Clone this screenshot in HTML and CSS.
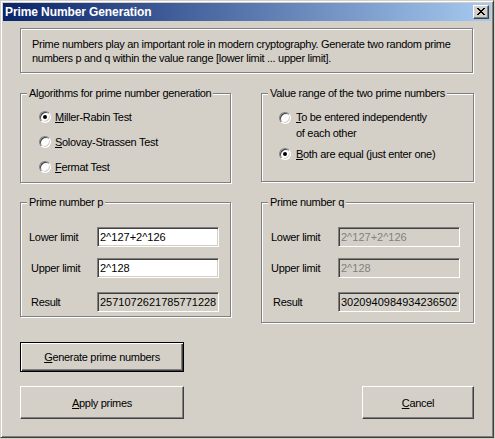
FILE: index.html
```
<!DOCTYPE html>
<html>
<head>
<meta charset="utf-8">
<link rel="stylesheet" href="styles.css">
</head>
<body>
<div class="window">
  <div class="titlebar">
    <span class="title">Prime Number Generation</span>
    <span class="close"><svg width="8" height="7" viewBox="0 0 8 7"><path d="M0 0h2v1h-2zM6 0h2v1h-2zM1 1h2v1h-2zM5 1h2v1h-2zM2 2h4v1h-4zM3 3h2v1h-2zM2 4h4v1h-4zM1 5h2v1h-2zM5 5h2v1h-2zM0 6h2v1h-2zM6 6h2v1h-2z" fill="#000"/></svg></span>
  </div>
  <div class="client">
    <div class="info">Prime numbers play an important role in modern cryptography. Generate two random prime<br>numbers p and q within the value range [lower limit ... upper limit].</div>

    <div class="row row1">
      <div class="group g-alg">
        <span class="legend">Algorithms for prime number generation</span>
        <div class="opts">
          <div class="opt"><span class="radio checked"></span><span><u>M</u>iller-Rabin Test</span></div>
          <div class="opt"><span class="radio"></span><span><u>S</u>olovay-Strassen Test</span></div>
          <div class="opt"><span class="radio"></span><span><u>F</u>ermat Test</span></div>
        </div>
      </div>
      <div class="group g-range">
        <span class="legend">Value range of the two prime numbers</span>
        <div class="opts opts-range">
          <div class="opt two-line"><span class="radio"></span><span><u>T</u>o be entered independently<br>of each other</span></div>
          <div class="opt"><span class="radio checked"></span><span><u>B</u>oth are equal (just enter one)</span></div>
        </div>
      </div>
    </div>

    <div class="row row2">
      <div class="group g-p">
        <span class="legend">Prime number p</span>
        <div class="fields">
          <div class="field"><span class="lbl pad8">Lower limit</span><span class="edit">2^127+2^126</span></div>
          <div class="field"><span class="lbl pad10">Upper limit</span><span class="edit">2^128</span></div>
          <div class="field res"><span class="lbl pad10">Result</span><span class="edit ro">2571072621785771228</span></div>
        </div>
      </div>
      <div class="group g-q">
        <span class="legend">Prime number q</span>
        <div class="fields">
          <div class="field"><span class="lbl pad9">Lower limit</span><span class="edit dis">2^127+2^126</span></div>
          <div class="field"><span class="lbl pad9">Upper limit</span><span class="edit dis">2^128</span></div>
          <div class="field res"><span class="lbl pad11">Result</span><span class="edit ro">3020940984934236502</span></div>
        </div>
      </div>
    </div>

    <div class="btn gen"><span><u>G</u>enerate prime numbers</span></div>

    <div class="actions">
      <div class="btn apply"><span><u>A</u>pply primes</span></div>
      <div class="btn cancel"><span><u>C</u>ancel</span></div>
    </div>
  </div>
</div>
</body>
</html>
```

FILE: styles.css
```
body {
  margin: 0;
  background: #D4D0C8;
  font: 11px/14px "Liberation Sans", Arial, sans-serif;
  letter-spacing: -0.3px;
  color: #000;
}

.window {
  width: 494px;
  height: 438px;
  box-sizing: border-box;
  border: 1px solid;
  border-color: #D4D0C8 #404040 #404040 #D4D0C8;
  box-shadow: inset 1px 1px #fff, inset -1px -1px #808080;
  padding: 2px;
}

.titlebar {
  height: 18px;
  background: linear-gradient(to right, #0A246A, #A6CAF0);
  display: flex;
  align-items: center;
  justify-content: space-between;
  padding: 0 2px;
}

.title {
  color: #fff;
  font-weight: bold;
  font-size: 12px;
  letter-spacing: -0.1px;
}

.close {
  width: 16px;
  height: 14px;
  box-sizing: border-box;
  background: #D4D0C8;
  border: 1px solid;
  border-color: #fff #404040 #404040 #fff;
  box-shadow: inset -1px -1px #808080;
  display: flex;
  align-items: center;
  justify-content: center;
  padding-bottom: 1px;
}

.close svg { display: block; }

.client {
  padding: 7px 17px 0;
}

.info {
  width: 453px;
  height: 45px;
  box-sizing: border-box;
  border: 1px solid #808080;
  box-shadow: inset 1px 1px #fff, 1px 1px #fff;
  padding: 8px 0 0 11px;
  white-space: nowrap;
}

.row {
  display: grid;
  grid-template-columns: 211px 213px;
  column-gap: 30px;
  align-items: start;
}

.row1 { margin-top: 20px; }
.row2 { margin-top: 19px; }

.group {
  position: relative;
  box-sizing: border-box;
  border: 1px solid #808080;
  box-shadow: inset 1px 1px #fff, 1px 1px #fff;
}

.legend {
  position: absolute;
  top: -8px;
  left: 6px;
  padding: 0 2px;
  background: #D4D0C8;
  white-space: nowrap;
}

.g-alg { height: 90px; padding: 16px 0 0 18px; }
.g-range { height: 89px; padding: 16px 0 0 17px; }
.g-p { height: 115px; }
.g-q { height: 121px; }

.opts {
  display: flex;
  flex-direction: column;
  gap: 11px;
}

.opts-range { gap: 6px; }

.opt {
  display: flex;
  align-items: flex-start;
  gap: 4px;
  white-space: nowrap;
}

.opts-range .opt { gap: 5px; }

.opt.two-line { line-height: 15.5px; }
.opt.two-line .radio { margin-top: 2px; }

.radio {
  flex: none;
  position: relative;
  width: 12px;
  height: 12px;
  margin-top: 1px;
  box-sizing: border-box;
  border-radius: 50%;
  background: #fff;
  border: 1px solid;
  border-color: #808080 #fff #fff #808080;
  box-shadow: inset 1px 1px #404040, inset -1px -1px #D4D0C8;
}

.radio.checked::after {
  content: "";
  position: absolute;
  left: 3px;
  top: 3px;
  width: 4px;
  height: 4px;
  border-radius: 50%;
  background: #000;
}

.fields {
  padding-top: 24px;
}

.field {
  display: flex;
  align-items: center;
  height: 20px;
}

.field + .field { margin-top: 11px; }
.field.res { margin-top: 14px; }

.lbl {
  width: 76px;
  box-sizing: border-box;
}

.pad8 { padding-left: 8px; }
.pad9 { padding-left: 9px; }
.pad10 { padding-left: 10px; }
.pad11 { padding-left: 11px; }

.edit {
  width: 122px;
  height: 20px;
  box-sizing: border-box;
  border: 1px solid;
  border-color: #808080 #fff #fff #808080;
  box-shadow: inset 1px 1px #404040, inset -1px -1px #D4D0C8;
  background: #fff;
  padding-left: 2px;
  line-height: 18px;
  letter-spacing: 0;
  white-space: nowrap;
  overflow: hidden;
}

.edit.ro { background: #D4D0C8; }
.edit.dis { background: #D4D0C8; color: #808080; }

.btn {
  box-sizing: border-box;
  display: flex;
  align-items: center;
  justify-content: center;
  background: #D4D0C8;
  border: 1px solid;
  border-color: #fff #404040 #404040 #fff;
  box-shadow: inset -1px -1px #808080;
}

.gen {
  margin-top: 19px;
  width: 164px;
  height: 30px;
  border: 1px solid #000;
  box-shadow: inset 1px 1px #fff, inset -1px -1px #404040, inset -2px -2px #808080;
}

.actions {
  margin-top: 14px;
  display: flex;
  justify-content: space-between;
}

.apply { width: 164px; height: 33px; }
.cancel { width: 112px; height: 33px; }
```
